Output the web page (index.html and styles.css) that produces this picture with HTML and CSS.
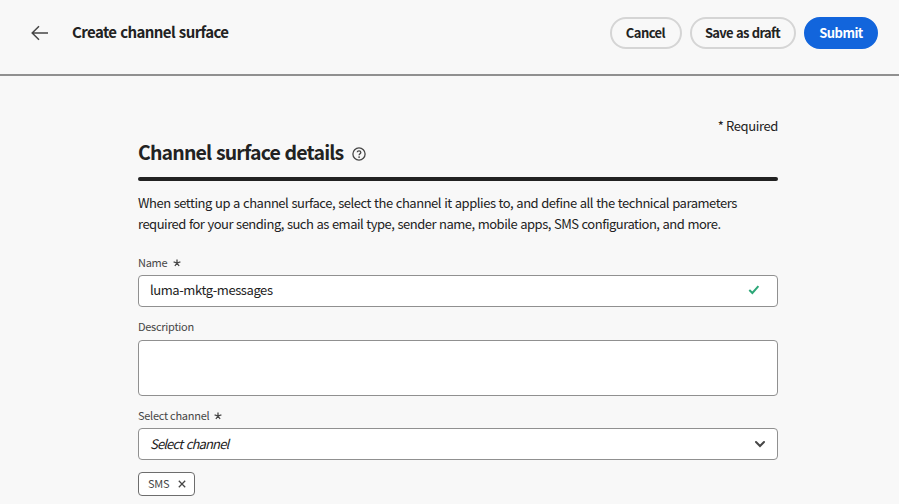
FILE: index.html
```html
<!DOCTYPE html>
<html lang="en">
<head>
<meta charset="utf-8">
<title>Create channel surface</title>
<link rel="stylesheet" href="styles.css">
</head>
<body>
<header class="topbar">
  <svg class="back" width="18" height="16" viewBox="0 0 18 16"><path d="M8 1.2 1.2 8 8 14.8M1.2 8H17"/></svg>
  <h1 class="page-title">Create channel surface</h1>
  <div class="actions">
    <button class="btn cancel">Cancel</button>
    <button class="btn draft">Save as draft</button>
    <button class="btn submit">Submit</button>
  </div>
</header>
<main class="form">
  <div class="required">* Required</div>
  <div class="heading">
    <h2>Channel surface details</h2>
    <svg class="help" width="14" height="14" viewBox="0 0 14 14"><circle cx="7" cy="7" r="6.1"/><path d="M5.2 5.2C5.4 3.3 8.8 3.3 8.8 5.4 8.8 6.7 7.1 6.7 7.1 8.2"/><circle class="dot" cx="7.1" cy="10.1" r=".9"/></svg>
  </div>
  <div class="rule"></div>
  <p class="intro"><span class="line-a">When setting up a channel surface, select the channel it applies to, and define all the technical parameters</span><br><span class="line-b">required for your sending, such as email type, sender name, mobile apps, SMS configuration, and more.</span></p>
  <div class="label name-label"><span>Name</span><svg class="star" width="8" height="8" viewBox="0 0 8 8"><path d="M4 4V.4M4 4 .6 2.9M4 4 1.9 7M4 4 6.1 7M4 4 7.4 2.9"/></svg></div>
  <div class="field"><span class="value">luma-mktg-messages</span><svg class="check" width="12" height="10" viewBox="0 0 12 10"><path d="M1.3 5 4.4 8 10.4 1.2"/></svg></div>
  <div class="label desc-label"><span>Description</span></div>
  <div class="field area"></div>
  <div class="label select-label"><span>Select channel</span><svg class="star" width="8" height="8" viewBox="0 0 8 8"><path d="M4 4V.4M4 4 .6 2.9M4 4 1.9 7M4 4 6.1 7M4 4 7.4 2.9"/></svg></div>
  <div class="field select"><span class="placeholder">Select channel</span><svg class="chevron" width="12" height="8" viewBox="0 0 12 8"><path d="M2 2 6 6 10 2"/></svg></div>
  <div class="tag"><span>SMS</span><svg width="8" height="8" viewBox="0 0 8 8"><path d="M.8.8 7.2 7.2M7.2.8.8 7.2"/></svg></div>
</main>
</body>
</html>
```
FILE: styles.css
```css
* { box-sizing: border-box; }
body {
  margin: 0;
  height: 504px;
  overflow: hidden;
  background: #f8f8f8;
  color: #222;
  font-family: "Noto Sans CJK SC", "Open Sans", sans-serif;
  font-size: 13px;
}
svg { display: block; flex: none; fill: none; }
h1, h2, p { margin: 0; }
.topbar {
  display: flex;
  align-items: flex-start;
  height: 76px;
  padding: 17px 21px 0 31px;
  border-bottom: 2px solid #909090;
}
.back { margin-top: 8px; stroke: #464646; stroke-width: 1.5; }
.page-title { margin-left: 23px; font-size: 15px; line-height: 30px; font-weight: 700; letter-spacing: -.59px; word-spacing: .9px; white-space: nowrap; }
.actions { display: flex; gap: 8px; margin-left: auto; }
.btn {
  height: 32px;
  padding: 0 1px 1px 0;
  border: 2px solid #d5d5d5;
  border-radius: 16px;
  background: transparent;
  color: #222;
  font: 700 13px/26px "Noto Sans CJK SC", "Open Sans", sans-serif;
  letter-spacing: -.55px;
  white-space: nowrap;
}
.cancel { width: 72px; }
.draft { width: 106px; letter-spacing: -.68px; word-spacing: .8px; }
.submit { width: 74px; padding-right: 0; background: #1265dc; border-color: #1265dc; color: #fff; }
.form { width: 640px; margin-left: 138px; }
.required { height: 20px; margin-top: 40px; line-height: 20px; letter-spacing: -.37px; text-align: right; }
.heading { display: flex; height: 41px; padding-top: 1px; }
.heading h2 { font-size: 19.5px; line-height: 29px; letter-spacing: -.84px; word-spacing: 1px; white-space: nowrap; }
.help { margin: 10px 0 0 9px; stroke: #464646; stroke-width: 1.3; }
.help .dot { fill: #464646; stroke: none; }
.rule { height: 4px; border-radius: 2px; background: #222; }
.intro { margin-top: 11px; height: 42px; line-height: 21px; white-space: nowrap; }
.line-a { letter-spacing: -.46px; word-spacing: .6px; }
.line-b { letter-spacing: -.49px; word-spacing: .6px; }
.label { display: flex; align-items: center; height: 16px; color: #464646; font-size: 11px; line-height: 16px; letter-spacing: -.27px; }
.label span { padding-bottom: 2px; }
.star { margin-left: 6px; stroke: #464646; stroke-width: 1.3; }
.name-label { margin-top: 21px; }
.desc-label { margin-top: 12px; }
.select-label { margin-top: 12px; }
.select-label .star { margin-left: 5px; }
.field {
  display: flex;
  align-items: center;
  justify-content: space-between;
  height: 32px;
  margin-top: 4px;
  padding: 0 17px 0 11px;
  border: 1px solid #909090;
  border-radius: 4px;
  background: #fff;
  line-height: 20px;
}
.area { height: 56px; margin-top: 5px; }
.select { padding-right: 11px; }
.value { padding-bottom: 2px; letter-spacing: -.42px; }
.check { margin-bottom: 2px; stroke: #2da778; stroke-width: 2; }
.chevron { stroke: #464646; stroke-width: 2; stroke-linecap: round; }
.placeholder { font-style: italic; letter-spacing: -.84px; word-spacing: 1.4px; }
.tag {
  display: flex;
  align-items: center;
  justify-content: space-between;
  width: 57px;
  height: 24px;
  margin-top: 12px;
  padding: 0 8px 0 9px;
  border: 1px solid #6d6d6d;
  border-radius: 4px;
  background: #fff;
  color: #464646;
  font-size: 11px;
  line-height: 16px;
  letter-spacing: -.3px;
}
.tag span { padding-bottom: 2px; }
.tag svg { stroke: #464646; stroke-width: 1.3; }
```
